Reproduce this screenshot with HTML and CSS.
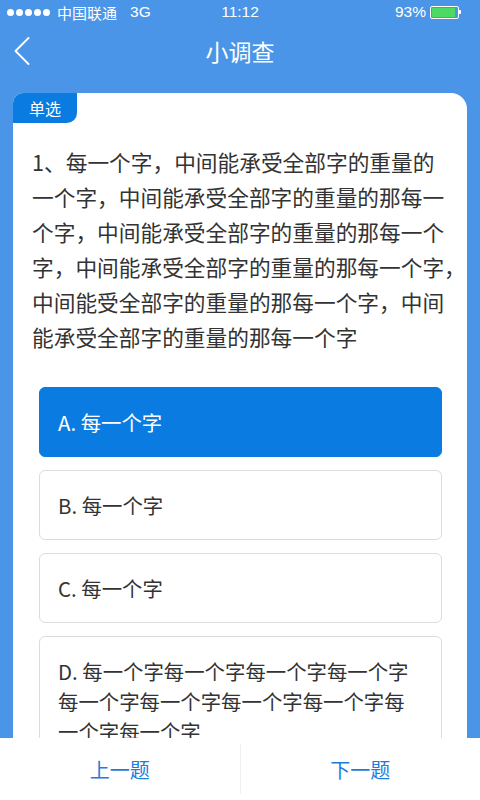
FILE: index.html
```html
<!DOCTYPE html>
<html lang="zh-CN">
<head>
<meta charset="utf-8">
<title>小调查</title>
<link rel="stylesheet" href="styles.css">
</head>
<body>
<div class="app">
  <header class="top">
    <div class="status">
      <div class="status-left">
        <span class="dots"><i></i><i></i><i></i><i></i><i></i></span>
        <span class="carrier">中国联通</span>
        <span class="net">3G</span>
      </div>
      <div class="time">11:12</div>
      <div class="status-right">
        <span class="pct">93%</span>
        <span class="battery"><span class="battery-fill"></span></span>
        <span class="battery-tip"></span>
      </div>
    </div>
    <div class="nav">
      <button class="back" aria-label="返回">
        <svg width="16" height="28" viewBox="0 0 16 28"><path d="M14.5 1 L1.5 14 L14.5 27" fill="none" stroke="#fff" stroke-width="1.8" stroke-linecap="round" stroke-linejoin="round"/></svg>
      </button>
      <h1 class="title">小调查</h1>
    </div>
  </header>

  <main class="content">
    <section class="card">
      <div class="tag">单选</div>
      <p class="question">1、每一个字，中间能承受全部字的重量的<br>一个字，中间能承受全部字的重量的那每一<br>个字，中间能承受全部字的重量的那每一个<br>字，中间能承受全部字的重量的那每一个字，<br>中间能受全部字的重量的那每一个字，中间<br>能承受全部字的重量的那每一个字</p>
      <ul class="options">
        <li class="option selected">A. 每一个字</li>
        <li class="option">B. 每一个字</li>
        <li class="option">C. 每一个字</li>
        <li class="option">D. 每一个字每一个字每一个字每一个字<br>每一个字每一个字每一个字每一个字每<br>一个字每一个字</li>
      </ul>
    </section>
  </main>

  <footer class="bottom">
    <button class="step">上一题</button>
    <span class="divider"></span>
    <button class="step">下一题</button>
  </footer>
</div>
</body>
</html>
```

FILE: styles.css
```css
* { box-sizing: border-box; }
html, body {
  margin: 0;
  padding: 0;
}
body {
  width: 480px;
  height: 800px;
  overflow: hidden;
  background: #4b95e8;
  font-family: "Noto Sans CJK SC", "Noto Sans", sans-serif;
}
.app {
  height: 800px;
  display: flex;
  flex-direction: column;
}
.top {
  color: #fff;
  flex: none;
}
.status {
  height: 24px;
  display: flex;
  align-items: center;
  justify-content: space-between;
  padding: 0 19px 0 7px;
  font-family: "Liberation Sans", "Noto Sans CJK SC", sans-serif;
  font-size: 15.5px;
  position: relative;
}
.status-left {
  display: flex;
  align-items: center;
}
.dots {
  display: flex;
  gap: 2px;
  margin-right: 7px;
}
.dots i {
  width: 7px;
  height: 7px;
  border-radius: 50%;
  background: #fff;
  display: block;
}
.carrier {
  font-family: "Noto Sans CJK SC", sans-serif;
  font-size: 15px;
  margin-right: 13px;
}
.net { font-size: 15.5px; }
.time {
  position: absolute;
  left: 0;
  right: 0;
  text-align: center;
  top: 3px;
  pointer-events: none;
}
.status-right {
  display: flex;
  align-items: center;
}
.pct { margin-right: 4px; }
.battery {
  width: 29px;
  height: 13px;
  border: 1px solid #fff;
  border-radius: 2px;
  padding: 1px;
  display: flex;
}
.battery-fill {
  width: 93%;
  background: #4cd964;
  display: block;
}
.battery-tip {
  width: 2px;
  height: 4px;
  background: #fff;
  border-radius: 0 1px 1px 0;
}
.nav {
  height: 54px;
  display: flex;
  align-items: center;
  justify-content: center;
  position: relative;
}
.back {
  position: absolute;
  left: 14px;
  top: 13px;
  width: 18px;
  height: 28px;
  padding: 0;
  border: 0;
  background: none;
}
.back svg { display: block; }
.title {
  margin: 0;
  font-size: 23px;
  font-weight: 400;
  line-height: 30px;
}
.content {
  flex: 1;
  overflow: hidden;
  padding: 15px 13px 0;
}
.card {
  background: #fff;
  border-radius: 10px 16px 0 0;
  overflow: hidden;
  min-height: 100%;
}
.tag {
  width: 64px;
  height: 30px;
  background: #0a7ce1;
  color: #fff;
  font-size: 16px;
  line-height: 30px;
  text-align: center;
  border-radius: 0 0 10px 0;
}
.question {
  margin: 21px 0 0;
  padding: 0 19px;
  font-size: 21.7px;
  line-height: 35px;
  color: #333;
  white-space: nowrap;
}
.options {
  list-style: none;
  margin: 33px 0 0;
  padding: 0 25px 0 26px;
  display: flex;
  flex-direction: column;
  gap: 13px;
}
.option {
  border: 1px solid #dcdcdc;
  border-radius: 6px;
  padding: 19px 18px;
  font-size: 20.4px;
  line-height: 30px;
  color: #333;
  white-space: nowrap;
}
.option.selected {
  background: #0a7ce1;
  border-color: #0a7ce1;
  color: #fff;
}
.bottom {
  flex: none;
  height: 62px;
  background: #fff;
  display: flex;
  align-items: center;
}
.step {
  flex: 1;
  height: 100%;
  border: 0;
  background: none;
  color: #1c7ddb;
  font-family: "Noto Sans CJK SC", sans-serif;
  font-size: 20px;
  padding: 0;
}
.divider {
  width: 1px;
  height: 50px;
  background: #f0f0f0;
}
```
